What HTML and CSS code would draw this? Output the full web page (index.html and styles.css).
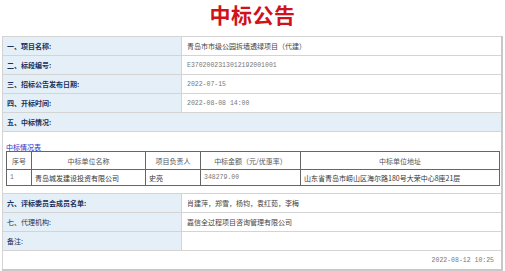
FILE: index.html
```html
<!DOCTYPE html>
<html lang="zh">
<head>
<meta charset="utf-8">
<link rel="stylesheet" href="styles.css">
</head>
<body>
<h1 class="title">中标公告</h1>
<table class="main">
  <colgroup><col class="c-label"><col></colgroup>
  <tr><td class="label b">一、项目名称:</td><td class="val dk">青岛市市级公园拆墙透绿项目（代建）</td></tr>
  <tr><td class="label b">二、标段编号:</td><td class="val">E3702002313012192001001</td></tr>
  <tr><td class="label b">三、招标公告发布日期:</td><td class="val">2022-07-15</td></tr>
  <tr><td class="label b">四、开标时间:</td><td class="val">2022-08-08 14:00</td></tr>
  <tr><td class="label b" colspan="2">五、中标情况:</td></tr>
  <tr><td colspan="2" class="inner-cell">
    <div class="caption">中标情况表</div>
    <table class="inner">
      <colgroup><col class="i1"><col class="i2"><col class="i3"><col class="i4"><col></colgroup>
      <tr class="head"><td>序号</td><td>中标单位名称</td><td>项目负责人</td><td>中标金额（元/优惠率）</td><td>中标单位地址</td></tr>
      <tr class="data"><td>1</td><td class="dk">青岛城发建设投资有限公司</td><td class="dk">史亮</td><td>348279.00</td><td class="dk">山东省青岛市崂山区海尔路180号大荣中心8座21层</td></tr>
    </table>
  </td></tr>
  <tr><td class="label b">六、评标委员会成员名单:</td><td class="val dk">肖建萍，郑雪，杨钧，袁红茹，李梅</td></tr>
  <tr><td class="label">七、代理机构:</td><td class="val dk">嘉信全过程项目咨询管理有限公司</td></tr>
  <tr><td class="label">备注:</td><td class="val"></td></tr>
  <tr><td colspan="2" class="foot">2022-08-12 10:25</td></tr>
</table>
</body>
</html>
```

FILE: styles.css
```css
html, body {
  margin: 0;
  padding: 0;
  background: #fff;
}
body {
  font-family: "Noto Sans CJK SC", "Liberation Sans", sans-serif;
  font-size: 7px;
  color: #333;
}
.title {
  margin: 0;
  height: 33px;
  line-height: 28px;
  text-align: center;
  font-size: 21px;
  font-weight: bold;
  color: #d0121b;
  letter-spacing: 0.5px;
}
.main {
  margin: 3px 0 0 2px;
  width: 501px;
  border-collapse: collapse;
  table-layout: fixed;
  border: 1px solid #c8c8c8;
  border-right: 2px solid #c8c8c8;
  border-bottom: 2px solid #c8c8c8;
}
.c-label { width: 179px; }
.main > tbody > tr > td {
  border: 1px solid #d4d4d4;
  height: 18px;
  padding: 0 0 0 4px;
  vertical-align: middle;
}
.label {
  background: #e4eff7;
  color: #1d2f5c;
}
.label.b { font-weight: bold; }
.val {
  color: #777;
  font-family: "Liberation Mono", "Noto Sans CJK SC", monospace;
  font-size: 6.5px;
  padding-left: 5px !important;
}
.val.dk {
  font-family: "Noto Sans CJK SC", sans-serif;
  font-size: 7px;
  color: #444;
}
.main > tbody > tr > td.inner-cell {
  height: auto;
  padding: 11px 5px 7px 3px;
}
.caption {
  color: #2a2fc8;
  font-size: 7px;
  line-height: 8px;
  margin-bottom: 0;
}
.inner {
  width: 494px;
  border-collapse: collapse;
  table-layout: fixed;
  border: 1px solid #555;
}
.i1 { width: 25px; }
.i2 { width: 114px; }
.i3 { width: 55px; }
.i4 { width: 100px; }
.inner td {
  border: 1px solid #666;
  padding: 0 3px;
  color: #555;
}
.inner .head td {
  height: 17px;
  text-align: center;
}
.inner .data td {
  height: 15px;
  font-family: "Liberation Mono", "Noto Sans CJK SC", monospace;
  font-size: 6.5px;
  color: #777;
}
.inner .data td.dk {
  font-family: "Noto Sans CJK SC", sans-serif;
  font-size: 7px;
  color: #333;
}
.main > tbody > tr > td.foot {
  height: 18px;
  text-align: right;
  padding-right: 7px;
  font-family: "Liberation Mono", monospace;
  font-size: 6.5px;
  color: #777;
}
```
